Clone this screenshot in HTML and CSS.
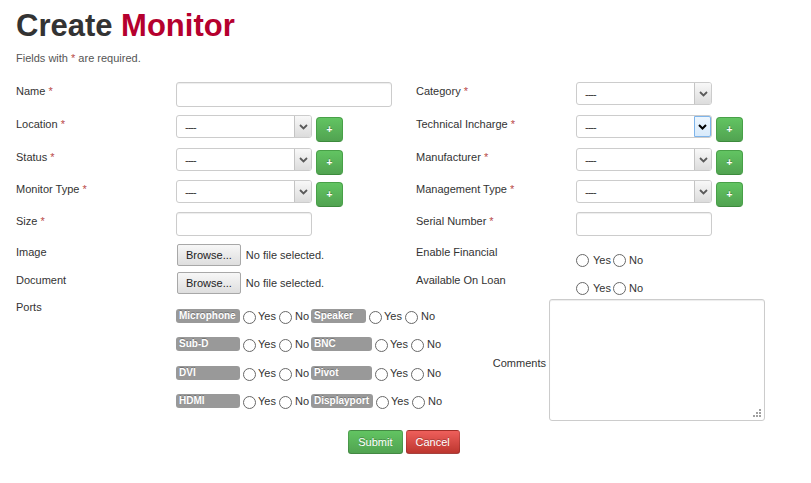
FILE: index.html
```html
<!DOCTYPE html>
<html lang="en">
<head>
<meta charset="utf-8">
<title>Create Monitor</title>
<link rel="stylesheet" href="styles.css">
</head>
<body>
<div class="page">
  <h1 class="title">Create <span class="accent">Monitor</span></h1>
  <p class="note">Fields with <span class="req">*</span> are required.</p>

  <form class="form">
    <div class="grid">
      <label class="lbl">Name <span class="req">*</span></label>
      <div class="field"><input class="input input-wide" type="text"></div>
      <label class="lbl">Category <span class="req">*</span></label>
      <div class="field">
        <div class="select"><span class="val">----</span><span class="arrow"><svg width="9" height="6" viewBox="0 0 9 6"><polyline points="1,1 4.5,4.5 8,1" fill="none" stroke="#5a5a5a" stroke-width="1.8"/></svg></span></div>
      </div>

      <label class="lbl">Location <span class="req">*</span></label>
      <div class="field">
        <div class="select"><span class="val">----</span><span class="arrow"><svg width="9" height="6" viewBox="0 0 9 6"><polyline points="1,1 4.5,4.5 8,1" fill="none" stroke="#5a5a5a" stroke-width="1.8"/></svg></span></div>
        <button type="button" class="add">+</button>
      </div>
      <label class="lbl">Technical Incharge <span class="req">*</span></label>
      <div class="field">
        <div class="select"><span class="val">----</span><span class="arrow focus"><svg width="9" height="6" viewBox="0 0 9 6"><polyline points="1,1 4.5,4.5 8,1" fill="none" stroke="#000" stroke-width="2"/></svg></span></div>
        <button type="button" class="add">+</button>
      </div>

      <label class="lbl">Status <span class="req">*</span></label>
      <div class="field">
        <div class="select"><span class="val">----</span><span class="arrow"><svg width="9" height="6" viewBox="0 0 9 6"><polyline points="1,1 4.5,4.5 8,1" fill="none" stroke="#5a5a5a" stroke-width="1.8"/></svg></span></div>
        <button type="button" class="add">+</button>
      </div>
      <label class="lbl">Manufacturer <span class="req">*</span></label>
      <div class="field">
        <div class="select"><span class="val">----</span><span class="arrow"><svg width="9" height="6" viewBox="0 0 9 6"><polyline points="1,1 4.5,4.5 8,1" fill="none" stroke="#5a5a5a" stroke-width="1.8"/></svg></span></div>
        <button type="button" class="add">+</button>
      </div>

      <label class="lbl">Monitor Type <span class="req">*</span></label>
      <div class="field">
        <div class="select"><span class="val">----</span><span class="arrow"><svg width="9" height="6" viewBox="0 0 9 6"><polyline points="1,1 4.5,4.5 8,1" fill="none" stroke="#5a5a5a" stroke-width="1.8"/></svg></span></div>
        <button type="button" class="add">+</button>
      </div>
      <label class="lbl">Management Type <span class="req">*</span></label>
      <div class="field">
        <div class="select"><span class="val">----</span><span class="arrow"><svg width="9" height="6" viewBox="0 0 9 6"><polyline points="1,1 4.5,4.5 8,1" fill="none" stroke="#5a5a5a" stroke-width="1.8"/></svg></span></div>
        <button type="button" class="add">+</button>
      </div>

      <label class="lbl">Size <span class="req">*</span></label>
      <div class="field"><input class="input input-short" type="text"></div>
      <label class="lbl">Serial Number <span class="req">*</span></label>
      <div class="field"><input class="input input-short" type="text"></div>

      <label class="lbl">Image</label>
      <div class="field file"><button type="button" class="browse">Browse...</button><span class="file-name">No file selected.</span></div>
      <label class="lbl">Enable Financial</label>
      <div class="field radios"><input type="radio" class="rb"><span>Yes</span><input type="radio" class="rb rb-no"><span>No</span></div>

      <label class="lbl">Document</label>
      <div class="field file"><button type="button" class="browse">Browse...</button><span class="file-name">No file selected.</span></div>
      <label class="lbl">Available On Loan</label>
      <div class="field radios"><input type="radio" class="rb"><span>Yes</span><input type="radio" class="rb rb-no"><span>No</span></div>
    </div>

    <div class="lower">
      <label class="lbl ports-lbl">Ports</label>
      <div class="ports">
        <div class="port-row">
          <span class="tag">Microphone</span><input type="radio" class="rb"><span>Yes</span><input type="radio" class="rb rb-no"><span>No</span>
          <span class="tag tag-2 tag-sm">Speaker</span><input type="radio" class="rb"><span>Yes</span><input type="radio" class="rb rb-no"><span>No</span>
        </div>
        <div class="port-row">
          <span class="tag">Sub-D</span><input type="radio" class="rb"><span>Yes</span><input type="radio" class="rb rb-no"><span>No</span>
          <span class="tag tag-2">BNC</span><input type="radio" class="rb"><span>Yes</span><input type="radio" class="rb rb-no"><span>No</span>
        </div>
        <div class="port-row">
          <span class="tag">DVI</span><input type="radio" class="rb"><span>Yes</span><input type="radio" class="rb rb-no"><span>No</span>
          <span class="tag tag-2">Pivot</span><input type="radio" class="rb"><span>Yes</span><input type="radio" class="rb rb-no"><span>No</span>
        </div>
        <div class="port-row">
          <span class="tag">HDMI</span><input type="radio" class="rb"><span>Yes</span><input type="radio" class="rb rb-no"><span>No</span>
          <span class="tag tag-2 tag-lg">Displayport</span><input type="radio" class="rb"><span>Yes</span><input type="radio" class="rb rb-no"><span>No</span>
        </div>
      </div>
      <label class="comments-lbl">Comments</label>
      <div class="comments-box">
        <textarea class="comments"></textarea>
        <svg class="grip" width="8" height="8" viewBox="0 0 8 8"><g fill="#a0a0a0"><rect x="6" y="0" width="2" height="2"/><rect x="6" y="3" width="2" height="2"/><rect x="3" y="3" width="2" height="2"/><rect x="6" y="6" width="2" height="2"/><rect x="3" y="6" width="2" height="2"/><rect x="0" y="6" width="2" height="2"/></g></svg>
      </div>
    </div>

    <div class="actions">
      <button type="button" class="btn btn-success">Submit</button>
      <button type="button" class="btn btn-danger">Cancel</button>
    </div>
  </form>
</div>
</body>
</html>
```

FILE: styles.css
```css
* { box-sizing: border-box; }

body {
  margin: 0;
  font-family: "Liberation Sans", Arial, sans-serif;
  font-size: 11px;
  line-height: 16px;
  color: #333;
  background: #fff;
}

.page { padding: 8px 16px 0; }

.title {
  margin: 0;
  font-size: 31px;
  line-height: 36px;
  font-weight: bold;
  color: #333;
}
.accent { color: #b5002e; }

.note {
  margin: 7px 0 0;
  font-size: 11px;
  line-height: 14px;
  color: #555;
}

.req { color: #b94a48; }

.grid {
  margin-top: 17px;
  display: grid;
  grid-template-columns: 160px 240px 160px 1fr;
  grid-template-rows: 33px 33px 32px 32px 31px 28px 28px;
}

.lbl { padding-top: 1px; }

.field { display: flex; align-items: flex-start; }

.input {
  height: 25px;
  margin: 0;
  border: 1px solid #ccc;
  border-radius: 3px;
  background: #fff;
  box-shadow: inset 0 1px 1px rgba(0,0,0,.075);
  font: inherit;
}
.input-wide { width: 216px; }
.input-short { width: 136px; height: 24px; }

.select {
  width: 136px;
  height: 23px;
  display: flex;
  align-items: center;
  border: 1px solid #ccc;
  border-radius: 3px;
  background: #fff;
}
.select .val {
  flex: 1;
  padding-left: 8px;
  letter-spacing: -1px;
  color: #333;
}
.arrow {
  align-self: stretch;
  width: 17px;
  display: flex;
  align-items: center;
  justify-content: center;
  background: linear-gradient(#f8f8f8, #dcdcdc);
  border-left: 1px solid #c4c4c4;
  border-radius: 0 2px 2px 0;
}
.arrow.focus {
  background: linear-gradient(#edf6fe, #d8eafb);
  border: 1px solid #7eb4ea;
}

.add {
  width: 27px;
  height: 25px;
  margin: 2px 0 0 4px;
  padding: 0;
  border: 1px solid #48a048;
  border-bottom-color: #3c8a3c;
  border-radius: 4px;
  background: linear-gradient(#62c462, #51a351);
  color: #fff;
  font-family: inherit;
  font-size: 10px;
  font-weight: bold;
  line-height: 23px;
  text-align: center;
  text-shadow: 0 -1px 0 rgba(0,0,0,.25);
}

.file { align-items: center; height: 24px; }
.browse {
  height: 22px;
  margin: 0 5px 0 1px;
  padding: 0 8px;
  border: 1px solid #a8a8a8;
  border-radius: 2px;
  background: linear-gradient(#f7f7f7, #dedede);
  font-family: inherit;
  font-size: 11px;
  color: #222;
}

.rb {
  appearance: none;
  -webkit-appearance: none;
  flex: none;
  width: 13px;
  height: 13px;
  margin: 3px 2px 0 3px;
  border: 1px solid #686868;
  border-radius: 50%;
  background: #fff;
}
.rb.rb-no { margin: 3px 3px 0 3px; }

.radios { padding-top: 9px; }
.radios .rb { margin: 2px 4px 0 0; }
.radios .rb.rb-no { margin: 2px 3px 0 2px; }

.lower {
  display: flex;
  align-items: flex-start;
}
.ports-lbl { width: 160px; padding-top: 0; }
.ports { width: 280px; padding-top: 9px; }
.port-row {
  display: flex;
  align-items: flex-start;
  height: 28.4px;
  white-space: nowrap;
}
.tag {
  flex: none;
  width: 64px;
  height: 14px;
  margin-top: 1px;
  padding-left: 3px;
  border-radius: 3px;
  background: #999;
  color: #fff;
  font-size: 10px;
  font-weight: bold;
  line-height: 14px;
  text-shadow: 0 -1px 0 rgba(0,0,0,.25);
  overflow: hidden;
}
.tag-2 { width: 61px; margin-left: 2px; }
.tag-sm { width: 55px; }
.tag-lg { width: 62px; }

.comments-lbl {
  width: 90px;
  text-align: right;
  align-self: center;
  padding-top: 6px;
}
.comments-box {
  position: relative;
  width: 216px;
  height: 122px;
  margin-left: 3px;
}
.comments {
  display: block;
  width: 100%;
  height: 100%;
  margin: 0;
  border: 1px solid #ccc;
  border-radius: 3px;
  resize: none;
  box-shadow: inset 0 1px 1px rgba(0,0,0,.075);
}
.grip {
  position: absolute;
  right: 4px;
  bottom: 4px;
}

.actions {
  display: flex;
  justify-content: center;
  gap: 3px;
  margin-top: 8px;
  padding-right: 3px;
}
.btn {
  height: 24px;
  padding: 0 9px;
  border: 1px solid rgba(0,0,0,.15);
  border-bottom-color: rgba(0,0,0,.3);
  border-radius: 3px;
  color: #fff;
  font-family: inherit;
  font-size: 11px;
  text-shadow: 0 -1px 0 rgba(0,0,0,.25);
}
.btn-success { background: linear-gradient(#62c462, #51a351); }
.btn-danger { background: linear-gradient(#ee5f5b, #bd362f); }
```
